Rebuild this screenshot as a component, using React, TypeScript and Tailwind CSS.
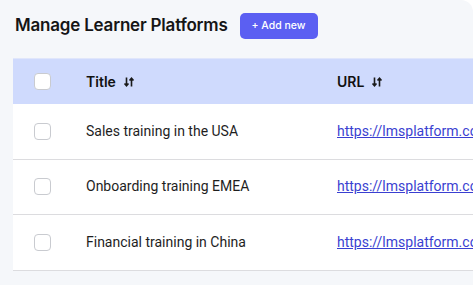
const rows = [
  { title: "Sales training in the USA", url: "https://lmsplatform.com/sales-usa" },
  { title: "Onboarding training EMEA", url: "https://lmsplatform.com/onboarding-emea" },
  { title: "Financial training in China", url: "https://lmsplatform.com/finance-china" },
]

function Checkbox() {
  return <div className="w-[17px] h-[17px] rounded-[4px] border border-[#c9cbd0] bg-white" />
}

function SortIcon() {
  return (
    <svg width="12" height="12" viewBox="0 0 12 12" className="ml-[7px] text-[#1a1a1a]">
      <path d="M3.5 1.5v8M1.5 7.5l2 2.2 2-2.2" stroke="currentColor" strokeWidth="1.6" fill="none" />
      <path d="M8.5 10.5v-8M6.5 4.5l2-2.2 2 2.2" stroke="currentColor" strokeWidth="1.6" fill="none" />
    </svg>
  )
}

export default function App() {
  return (
    <div className="w-[473px] h-[285px] bg-white overflow-hidden" style={{ fontFamily: "Inter, 'Noto Sans', sans-serif" }}>
      <div className="w-[473px] h-[400px] bg-[#f5f7fa] rounded-tr-[12px] pl-[13px]">
        {/* Header */}
        <div className="flex items-center h-[50px] pt-[2px] pl-[2px]">
          <h1 className="text-[17px] font-semibold text-[#151515] tracking-[-0.2px]">Manage Learner Platforms</h1>
          <button className="ml-[12px] h-[26px] px-[12px] rounded-[5px] bg-[#5b5ff2] text-white text-[10.5px] font-medium">
            + Add new
          </button>
        </div>

        {/* Table */}
        <div className="mt-[8px] w-[620px] bg-white">
          <div className="flex items-center h-[46px] bg-[#cfdafd] border-t border-[#e0e6fb]">
            <div className="w-[73px] pl-[21px]"><Checkbox /></div>
            <div className="w-[251px] flex items-center text-[14px] font-semibold text-[#111]">Title<SortIcon /></div>
            <div className="flex items-center text-[14px] font-semibold text-[#111]">URL<SortIcon /></div>
          </div>
          {rows.map((r) => (
            <div key={r.title} className="flex items-center h-[55.5px] border-b border-[#dcdcdf]">
              <div className="w-[73px] pl-[21px]"><Checkbox /></div>
              <div className="w-[251px] text-[14px] text-[#1e1e1e]" style={{ fontFamily: "Roboto, sans-serif" }}>{r.title}</div>
              <a href="#" className="text-[14px] text-[#3a3fd1] underline whitespace-nowrap" style={{ fontFamily: "Roboto, sans-serif" }}>{r.url}</a>
            </div>
          ))}
        </div>
      </div>
    </div>
  )
}
